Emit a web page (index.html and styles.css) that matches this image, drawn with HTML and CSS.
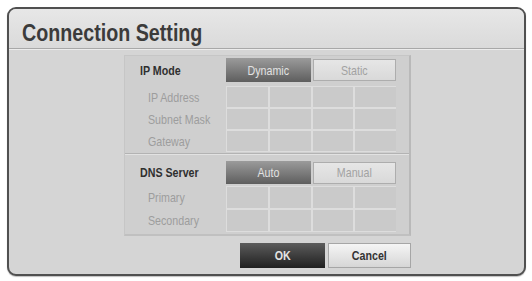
FILE: index.html
```html
<!DOCTYPE html>
<html>
<head>
<meta charset="utf-8">
<link rel="stylesheet" href="styles.css">
</head>
<body>
<div class="window">
  <div class="titlebar"><h1 class="title"><span class="narrow">Connection Setting</span></h1></div>
  <div class="content">
    <div class="panel">
      <section class="group">
        <div class="row row-mode">
          <span class="label label-main"><span class="narrow">IP Mode</span></span>
          <div class="toggle">
            <span class="btn btn-on"><span class="narrow c">Dynamic</span></span>
            <span class="btn btn-off"><span class="narrow c">Static</span></span>
          </div>
        </div>
        <div class="row row-field">
          <span class="label label-sub"><span class="narrow">IP Address</span></span>
          <div class="cells"><i></i><i></i><i></i><i></i></div>
        </div>
        <div class="row row-field">
          <span class="label label-sub"><span class="narrow">Subnet Mask</span></span>
          <div class="cells"><i></i><i></i><i></i><i></i></div>
        </div>
        <div class="row row-field">
          <span class="label label-sub"><span class="narrow">Gateway</span></span>
          <div class="cells"><i></i><i></i><i></i><i></i></div>
        </div>
      </section>
      <section class="group group-dns">
        <div class="row row-mode">
          <span class="label label-main"><span class="narrow">DNS Server</span></span>
          <div class="toggle">
            <span class="btn btn-on"><span class="narrow c">Auto</span></span>
            <span class="btn btn-off"><span class="narrow c">Manual</span></span>
          </div>
        </div>
        <div class="row row-field row-dns">
          <span class="label label-sub"><span class="narrow">Primary</span></span>
          <div class="cells"><i></i><i></i><i></i><i></i></div>
        </div>
        <div class="row row-field row-dns">
          <span class="label label-sub"><span class="narrow">Secondary</span></span>
          <div class="cells"><i></i><i></i><i></i><i></i></div>
        </div>
      </section>
    </div>
    <div class="actions">
      <span class="action action-ok"><span class="narrow c">OK</span></span>
      <span class="action action-cancel"><span class="narrow c">Cancel</span></span>
    </div>
  </div>
</div>
</body>
</html>
```
FILE: styles.css
```css
* { box-sizing: border-box; }
html, body { margin: 0; padding: 0; background: #ffffff; }
body {
  font-family: "Liberation Sans", Arial, sans-serif;
  width: 532px;
  height: 281px;
  overflow: hidden;
}
.narrow {
  display: inline-block;
  transform: scaleX(0.82);
  transform-origin: left center;
  white-space: nowrap;
}
.narrow.c { transform-origin: center center; }
.window {
  margin: 7px 0 0 7px;
  width: 519px;
  height: 269px;
  border: 2px solid #505050;
  border-radius: 9px;
  background: #d5d5d5;
  overflow: hidden;
  box-shadow: 0 1px 1px rgba(0,0,0,0.25);
  display: flex;
  flex-direction: column;
}
.titlebar {
  height: 40px;
  flex: none;
  background: linear-gradient(#e7e7e7, #dadada);
  border-bottom: 1px solid #a8a8a8;
  box-shadow: 0 1px 0 #ececec;
  display: flex;
  align-items: flex-end;
  padding: 0 0 3px 13px;
}
.title {
  margin: 0;
  font-size: 24px;
  line-height: 24px;
  font-weight: bold;
  color: #3b3b3b;
}
.content {
  flex: 1;
  padding: 6px 0 0 115px;
  display: flex;
  flex-direction: column;
}
.panel {
  width: 287px;
  height: 181px;
  background: #cfcfcf;
  border: 1px solid #c6c6c6;
  border-right: 2px solid #b9b9b9;
  border-bottom: 2px solid #c0c0c0;
  display: flex;
  flex-direction: column;
  padding: 2px 0 0 0;
}
.group { display: flex; flex-direction: column; }
.group-dns {
  margin-top: 1px;
  border-top: 1px solid #b3b3b3;
  box-shadow: inset 0 1px 0 #e2e2e2;
  padding-top: 7px;
}
.row {
  display: grid;
  grid-template-columns: 101px 170px;
  align-items: center;
}
.row-mode { height: 24px; margin-bottom: 4px; }
.group-dns .row-mode { height: 23px; margin-bottom: 2px; }
.row-field { height: 22px; }
.row-dns { height: 23px; }
.label { font-size: 13px; white-space: nowrap; }
.label-main { font-weight: bold; color: #2f2f2f; padding-left: 15px; }
.label-sub { color: #9d9d9d; padding-left: 23px; }
.toggle {
  display: grid;
  grid-template-columns: 85px 83px;
  gap: 2px;
  height: 100%;
  align-items: center;
}
.btn {
  display: flex;
  align-items: center;
  justify-content: center;
  font-size: 13px;
  height: 100%;
}
.btn-on {
  background: linear-gradient(#9b9b9b, #5e5e5e);
  color: #e2e2e2;
}
.btn-off {
  height: 22px;
  background: linear-gradient(#e6e6e6, #d9d9d9);
  border: 1px solid #adadad;
  color: #a2a2a2;
}
.cells {
  display: grid;
  grid-template-columns: repeat(4, 1fr);
  gap: 2px;
  height: 100%;
  background: #dddddd;
  padding: 1px 0 1px 1px;
}
.cells i {
  display: block;
  background: #cacaca;
}
.actions {
  display: flex;
  gap: 3px;
  margin: 7px 0 0 116px;
}
.action {
  display: flex;
  align-items: center;
  justify-content: center;
  height: 25px;
  font-size: 13px;
  font-weight: bold;
}
.action-ok {
  width: 85px;
  background: linear-gradient(#5c5c5c, #1f1f1f);
  color: #e3e3e3;
}
.action-cancel {
  width: 83px;
  background: linear-gradient(#f5f5f5, #d6d6d6);
  border: 1px solid #a6a6a6;
  color: #333333;
}
```
